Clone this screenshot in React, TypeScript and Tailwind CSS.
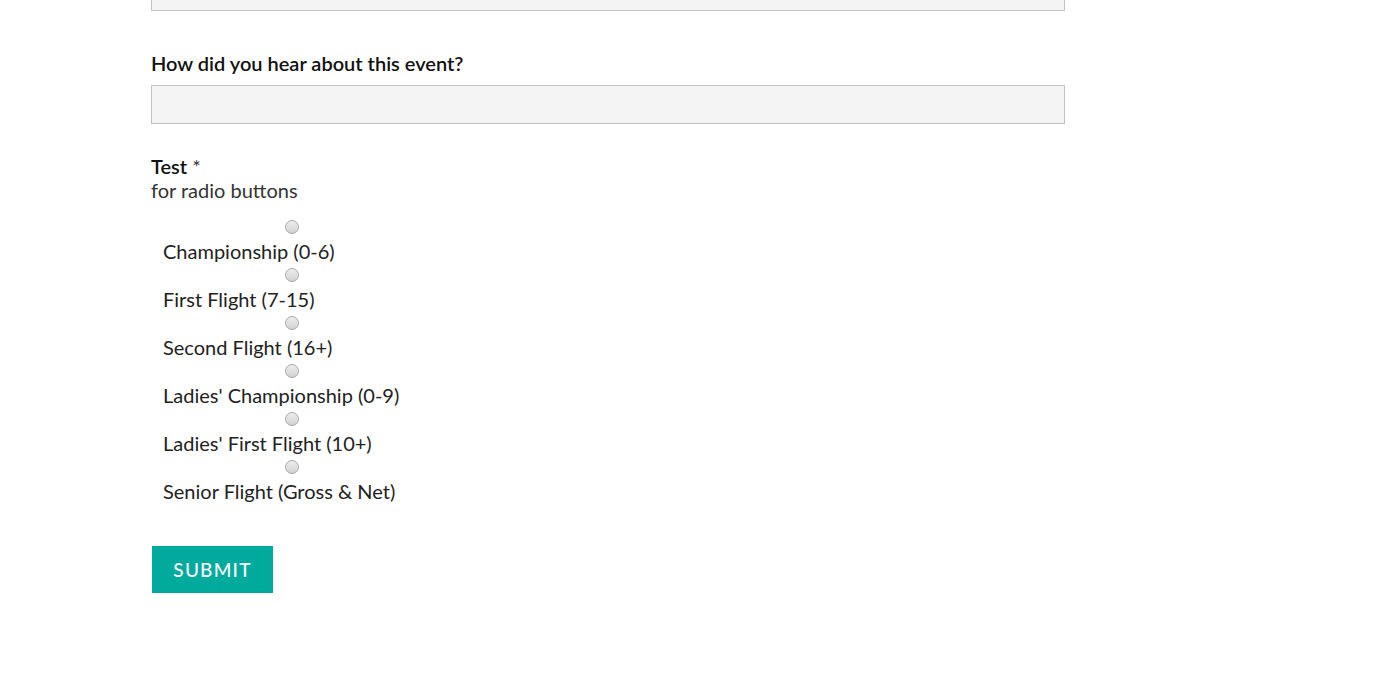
import React from "react";

const options = [
  "Championship (0-6)",
  "First Flight (7-15)",
  "Second Flight (16+)",
  "Ladies' Championship (0-9)",
  "Ladies' First Flight (10+)",
  "Senior Flight (Gross & Net)",
];

function Radio() {
  return (
    <span className="block w-[14px] h-[14px] rounded-full border border-[#a8a8a8] bg-gradient-to-b from-[#eeeeee] to-[#d2d2d2]" />
  );
}

export default function App() {
  return (
    <div
      className="min-h-[678px] bg-white text-[20px] leading-[24px] text-[#222]"
      style={{ fontFamily: "Lato, 'Open Sans', sans-serif" }}
    >
      <div className="ml-[151px] w-[914px] pb-[86px]">
        <div className="mt-[-28px] h-[39px] border border-[#c2c2c2] bg-[#f4f4f4]" />

        <div className="mt-[40px] font-semibold text-[#111]">How did you hear about this event?</div>
        <div className="mt-[10px] h-[39px] border border-[#c2c2c2] bg-[#f4f4f4]" />

        <div className="mt-[30px]">
          <div className="text-[#111]">
            <span className="font-semibold">Test</span> <span className="text-[#333]">*</span>
          </div>
          <div className="text-[#333]">for radio buttons</div>
        </div>

        <div className="mt-[13px] pl-[12px]">
          {options.map((o) => (
            <div key={o}>
              <div className="pt-[5px] pb-[5px] pl-[122px]">
                <Radio />
              </div>
              <div className="text-[#222]">{o}</div>
            </div>
          ))}
        </div>

        <button className="mt-[43px] ml-[1px] block h-[47px] w-[121px] bg-[#00aa9d] text-[19px] font-medium tracking-[1.2px] text-white">
          SUBMIT
        </button>
      </div>
    </div>
  );
}
